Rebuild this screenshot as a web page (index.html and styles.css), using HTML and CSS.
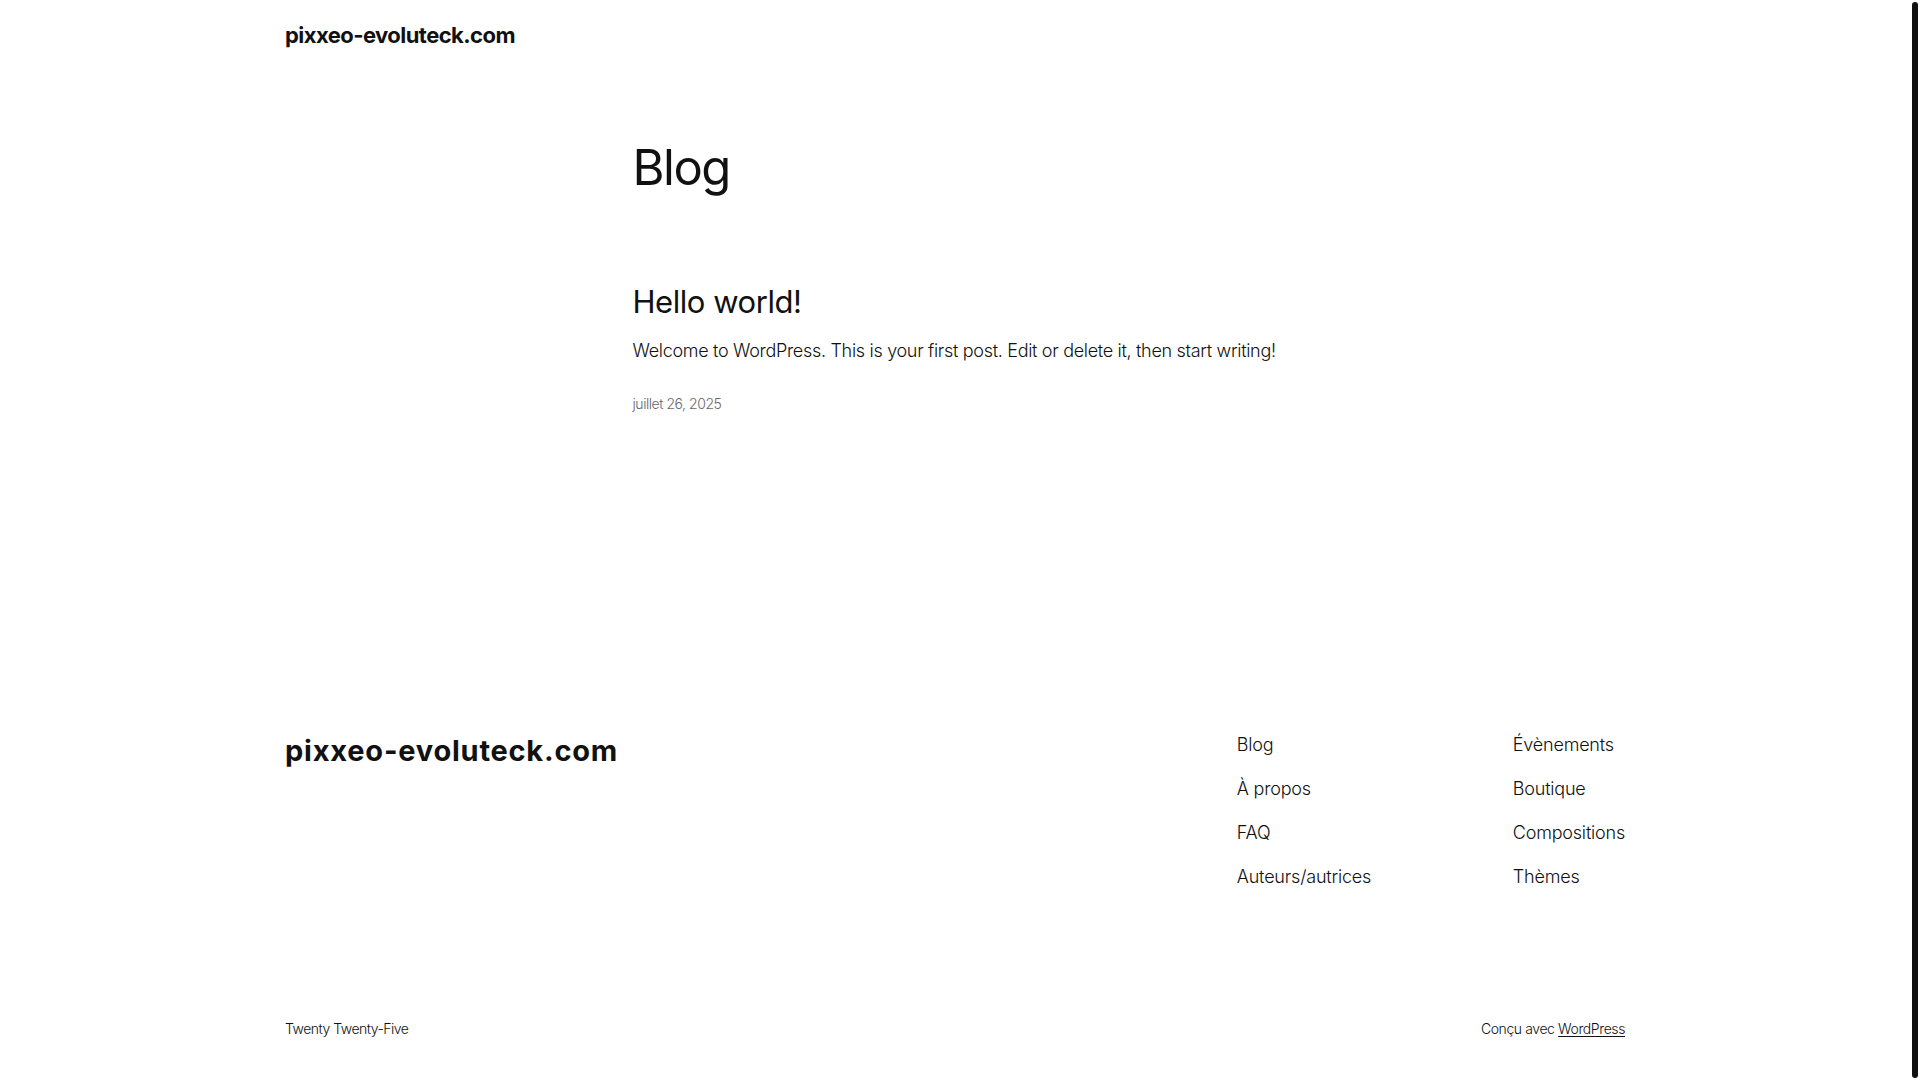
FILE: index.html
```html
<!DOCTYPE html>
<html lang="fr">
<head>
<meta charset="utf-8">
<title>Blog – pixxeo-evoluteck.com</title>
<link rel="stylesheet" href="styles.css">
</head>
<body>
<div class="site">
  <header class="site-header">
    <div class="wide">
      <a class="site-title" href="#">pixxeo-evoluteck.com</a>
    </div>
  </header>

  <main class="site-main">
    <div class="narrow">
      <h1 class="page-title">Blog</h1>
      <article class="post">
        <h2 class="post-title"><a href="#">Hello world!</a></h2>
        <p class="post-excerpt">Welcome to WordPress. This is your first post. Edit or delete it, then start writing!</p>
        <div class="post-date">juillet 26, 2025</div>
      </article>
    </div>
  </main>

  <footer class="site-footer">
    <div class="wide">
      <div class="footer-top">
        <a class="footer-title" href="#">pixxeo-evoluteck.com</a>
        <nav class="footer-nav">
          <ul class="nav-col">
            <li><a href="#">Blog</a></li>
            <li><a href="#">À propos</a></li>
            <li><a href="#">FAQ</a></li>
            <li><a href="#">Auteurs/autrices</a></li>
          </ul>
          <ul class="nav-col">
            <li><a href="#">Évènements</a></li>
            <li><a href="#">Boutique</a></li>
            <li><a href="#">Compositions</a></li>
            <li><a href="#">Thèmes</a></li>
          </ul>
        </nav>
      </div>
      <div class="footer-bottom">
        <p class="credit">Twenty Twenty-Five</p>
        <p class="credit credit-right">Conçu avec <a class="wp-link" href="#">WordPress</a></p>
      </div>
    </div>
  </footer>
</div>
<div class="scroll-thumb"></div>
</body>
</html>
```
FILE: styles.css
```css
html {
  background: #ffffff;
}
body {
  margin: 0;
  color: #111111;
  font-family: Inter, "Noto Sans", "Liberation Sans", sans-serif;
  font-weight: 300;
  -webkit-font-smoothing: antialiased;
}
a {
  color: inherit;
  text-decoration: none;
}
.site {
  margin-right: 10px;
}
.scroll-thumb {
  position: fixed;
  top: 2px;
  bottom: 2px;
  right: 2px;
  width: 6px;
  border-radius: 3px;
  background: #111111;
}
.wide {
  max-width: 1340px;
  margin: 0 auto;
}
.narrow {
  max-width: 645px;
  margin: 0 auto;
}
.site-header {
  padding-top: 22px;
}
.site-title {
  display: block;
  font-size: 22px;
  line-height: 26.4px;
  font-weight: 700;
  letter-spacing: -0.55px;
}
.site-main {
  padding-top: 90.4px;
  padding-bottom: 309.2px;
}
.page-title {
  margin: 0;
  font-size: 49px;
  line-height: 58.8px;
  font-weight: 400;
  letter-spacing: -1.5px;
}
.post {
  padding-top: 85.8px;
}
.post-title {
  margin: 0;
  font-size: 31px;
  line-height: 37.2px;
  font-weight: 400;
  letter-spacing: -0.45px;
}
.post-excerpt {
  margin: 16.8px 0 0;
  font-size: 18px;
  line-height: 28.8px;
  white-space: nowrap;
  letter-spacing: -0.31px;
}
.post-date {
  margin-top: 27.1px;
  font-size: 14px;
  line-height: 21px;
  color: #686868;
  letter-spacing: -0.45px;
}
.footer-top {
  display: flex;
  justify-content: space-between;
  align-items: flex-start;
}
.footer-title {
  margin-top: 10.2px;
  font-size: 29px;
  line-height: 33.6px;
  font-weight: 700;
  letter-spacing: 0.77px;
}
.footer-nav {
  display: grid;
  grid-template-columns: 276px auto;
}
.nav-col {
  list-style: none;
  margin: 0;
  padding: 0;
  font-size: 18px;
  line-height: 44px;
  letter-spacing: -0.2px;
}
.footer-bottom {
  display: flex;
  justify-content: space-between;
  padding-top: 119.6px;
  padding-bottom: 43.3px;
}
.credit {
  margin: 0;
  font-size: 14px;
  line-height: 19.6px;
  letter-spacing: -0.5px;
}
.credit-right {
  letter-spacing: -0.4px;
}
.wp-link {
  text-decoration: underline;
  text-underline-offset: 2px;
}
```
